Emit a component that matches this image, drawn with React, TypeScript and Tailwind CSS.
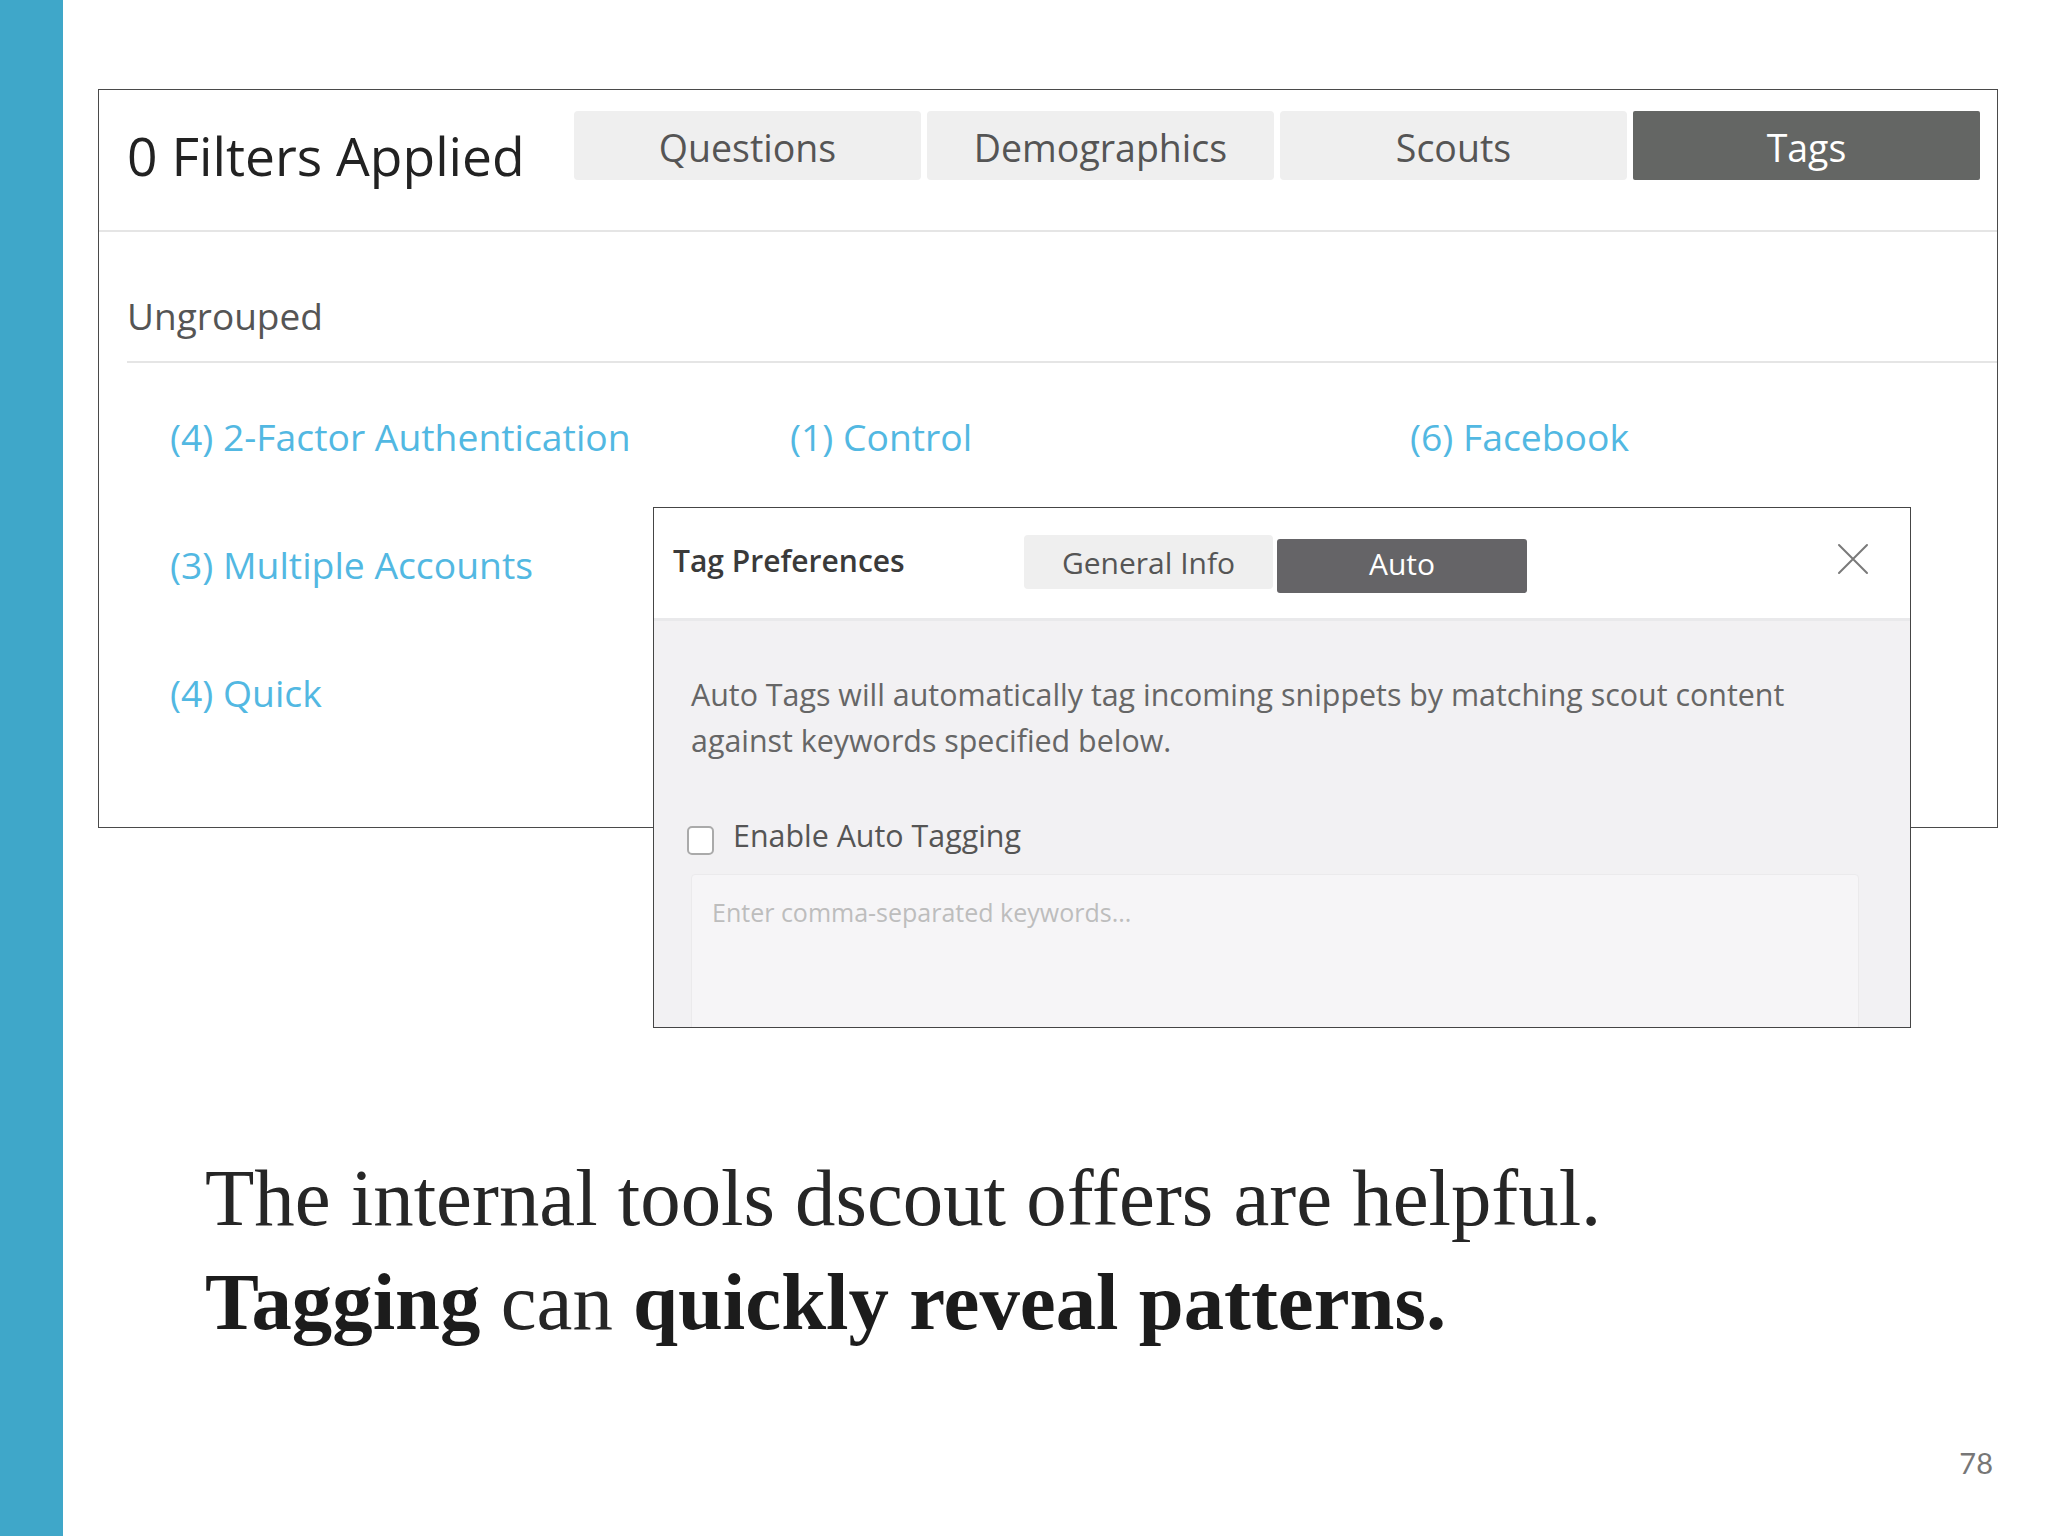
const TABS = ['Questions', 'Demographics', 'Scouts', 'Tags'];

const TAG_ROWS = [
  ['(4) 2-Factor Authentication', '(1) Control', '(6) Facebook'],
  ['(3) Multiple Accounts', '', ''],
  ['(4) Quick', '', ''],
];

function CloseIcon() {
  return (
    <svg width="32" height="32" viewBox="0 0 32 32" fill="none" stroke="#7a7a7a" strokeWidth="2" strokeLinecap="round">
      <path d="M2 2 30 30M30 2 2 30" />
    </svg>
  );
}

function TagPreferences() {
  return (
    <div className="absolute left-[554px] top-[417px] w-[1258px] h-[521px] overflow-hidden border border-[#454545] bg-white">
      {/* Header */}
      <div className="flex items-start h-[113px] border-b-[3px] border-[#e9e9eb]">
        <div className="w-[370px] pl-[19px] pt-[33px] text-[30px] leading-[40px] font-semibold text-[#3a3a3a]">
          Tag Preferences
        </div>
        <div className="flex items-start gap-[4px] pt-[27px]">
          <div className="w-[249px] h-[54px] rounded-[4px] bg-[#efefef] flex items-center justify-center text-[30px] text-[#555]">
            General Info
          </div>
          <div className="mt-[4px] w-[250px] h-[54px] pb-[5px] rounded-[3px] bg-[#656467] flex items-center justify-center text-[30px] text-white">
            Auto
          </div>
        </div>
        <div className="ml-auto mr-[41px] mt-[35px]">
          <CloseIcon />
        </div>
      </div>

      {/* Body */}
      <div className="h-full bg-[#f2f1f3] px-[37px] pt-[51px]">
        <p className="text-[30.4px] leading-[46px] text-[#666]">
          Auto Tags will automatically tag incoming snippets by matching scout content
          <br />
          against keywords specified below.
        </p>
        <label className="mt-[52px] flex items-center h-[40px]">
          <span className="-ml-[4px] mt-[8px] w-[27px] h-[29px] rounded-[5px] border-2 border-[#aaa] bg-white" />
          <span className="ml-[19px] text-[30.4px] text-[#555]">Enable Auto Tagging</span>
        </label>
        <div className="mt-[18px] mr-[14px] h-[220px] rounded-[4px] border border-[#ebeaec] bg-[#f6f5f7] px-[20px] pt-[18px] text-[25px] leading-[38px] text-[#bdbdbd]">
          Enter comma-separated keywords...
        </div>
      </div>
    </div>
  );
}

export default function App() {
  return (
    <div
      className="w-[2048px] h-[1536px] flex bg-white"
      style={{ fontFamily: '"Open Sans", "Noto Sans", sans-serif' }}
    >
      <div className="w-[63px] shrink-0 bg-[#3fa7c9]" />

      <div className="flex-1 flex flex-col pl-[35px] pt-[89px]">
        {/* Filters panel */}
        <div className="relative w-[1900px] h-[739px] border border-[#4a4a4a] bg-white">
          <div className="flex items-start h-[142px] border-b-2 border-[#e5e5e5]">
            <h1 className="pl-[28px] pt-[30px] text-[53.4px] leading-[72px] text-[#222]">0 Filters Applied</h1>
            <div className="ml-auto mr-[17px] pt-[21px] flex gap-[6px]">
              {TABS.map((t) => {
                const active = t === 'Tags';
                return (
                  <div
                    key={t}
                    className={`w-[347px] h-[69px] pt-[5px] flex items-center justify-center text-[37.5px] ${
                      active ? 'bg-[#646664] text-white rounded-[2px]' : 'bg-[#efefef] text-[#555] rounded-[4px]'
                    }`}
                  >
                    {t}
                  </div>
                );
              })}
            </div>
          </div>

          <div className="ml-[28px] border-b-2 border-[#e5e5e5] pt-[59px] pb-[20px] text-[37px] leading-[50px] text-[#555]">
            Ungrouped
          </div>

          <div className="pl-[71px] pt-[49px] grid grid-cols-[620px_620px_1fr] gap-y-[78px] text-[37.3px] leading-[50px] text-[#52b8e2]">
            {TAG_ROWS.flat().map((t, i) => (
              <div key={i}>{t}</div>
            ))}
          </div>

          <TagPreferences />
        </div>

        {/* Caption */}
        <div
          className="mt-[318px] pl-[107px] text-[80.8px] leading-[104px] text-[#1c1c1c]"
          style={{ fontFamily: '"Liberation Serif", serif' }}
        >
          <p className="text-[#262626]">The internal tools dscout offers are helpful.</p>
          <p>
            <b className="font-bold">Tagging</b> <span className="text-[#262626]">can</span>{' '}
            <b className="font-bold">quickly reveal patterns.</b>
          </p>
        </div>

        <div className="mt-auto mb-[52px] mr-[55px] self-end text-[29px] text-[#777]" style={{ fontFamily: 'Lato, sans-serif' }}>
          78
        </div>
      </div>
    </div>
  );
}
